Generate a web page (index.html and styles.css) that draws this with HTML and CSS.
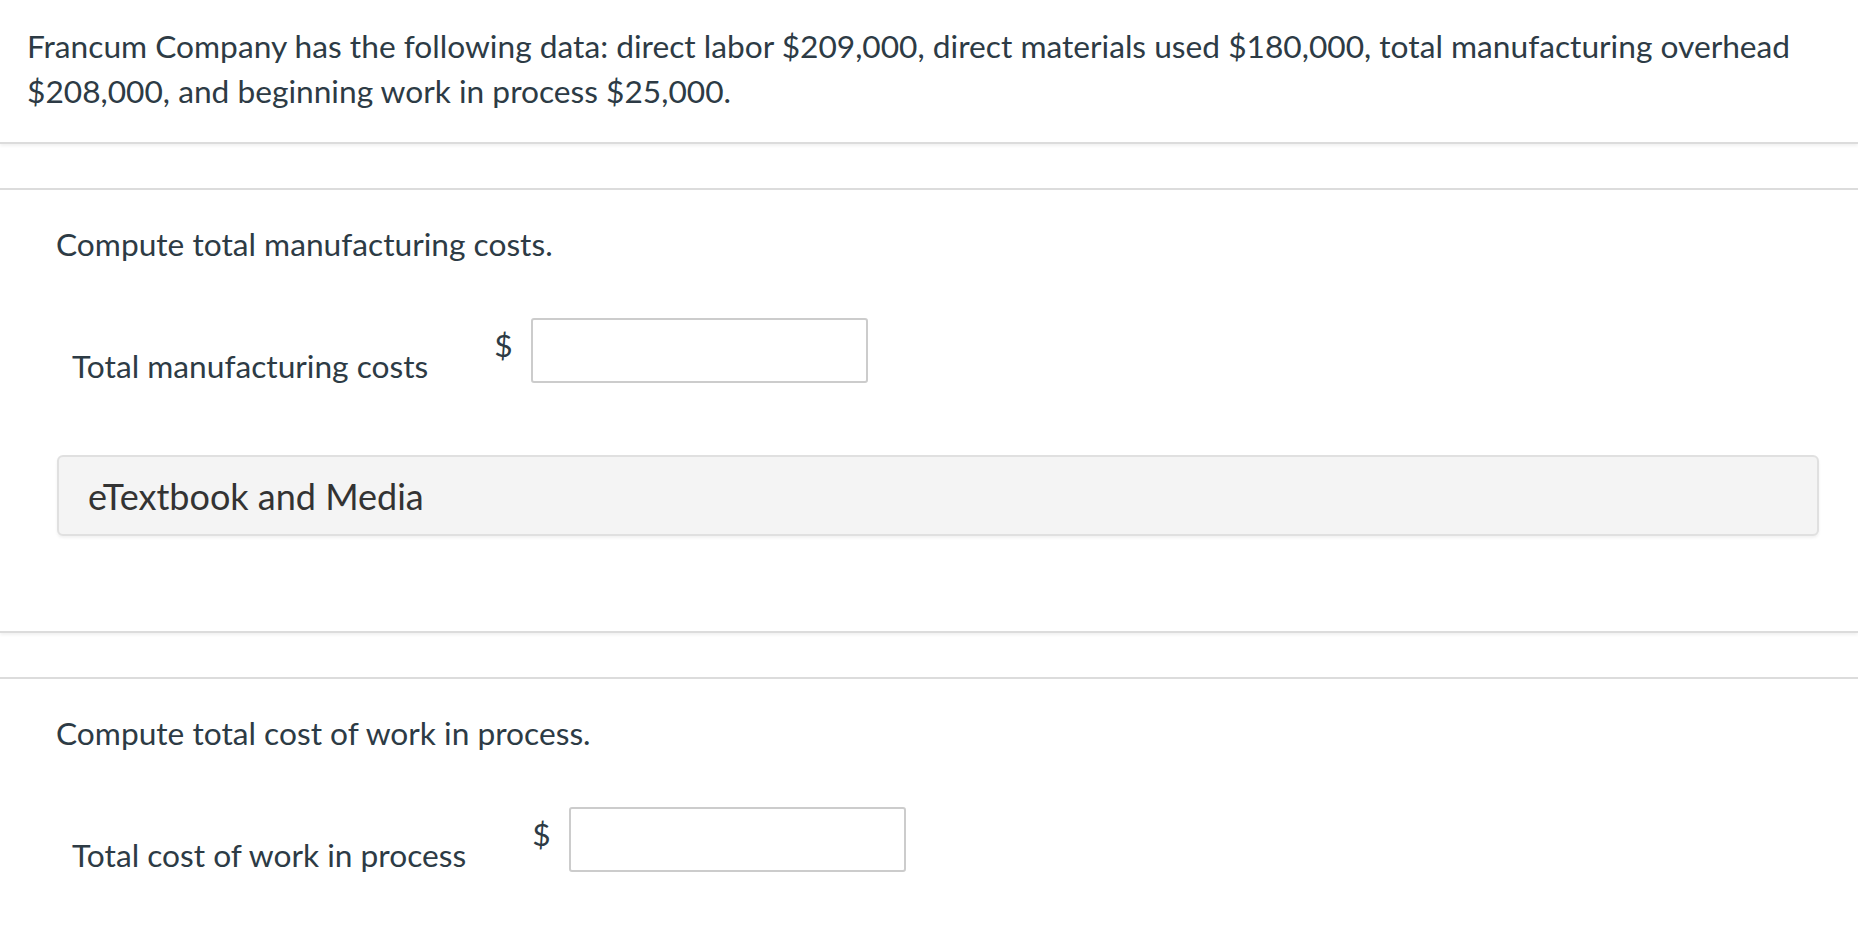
FILE: index.html
```html
<!DOCTYPE html>
<html lang="en">
<head>
<meta charset="utf-8">
<title>Francum Company</title>
<link rel="stylesheet" href="styles.css">
</head>
<body>
<div class="page">
  <section class="stem">
    <p class="stem-text">Francum Company has the following data: direct labor $209,000, direct materials used $180,000, total manufacturing overhead $208,000, and beginning work in process $25,000.</p>
  </section>

  <section class="part">
    <p class="prompt">Compute total manufacturing costs.</p>
    <div class="answer-row">
      <span class="answer-label">Total manufacturing costs</span>
      <span class="currency">$</span>
      <input class="answer-input" type="text" aria-label="Total manufacturing costs">
    </div>
    <div class="media-box">eTextbook and Media</div>
  </section>

  <section class="part part-last">
    <p class="prompt">Compute total cost of work in process.</p>
    <div class="answer-row">
      <span class="answer-label">Total cost of work in process</span>
      <span class="currency">$</span>
      <input class="answer-input" type="text" aria-label="Total cost of work in process">
    </div>
  </section>
</div>
</body>
</html>
```

FILE: styles.css
```css
html, body {
  margin: 0;
  padding: 0;
  background: #ffffff;
}

body {
  font-family: Lato, "Open Sans", "Liberation Sans", sans-serif;
  color: #2d3b45;
  font-size: 31.7px;
  line-height: 45px;
}

.page {
  display: flex;
  flex-direction: column;
  gap: 44px;
}

.stem {
  padding: 24px 28px 28px 27px;
  border-bottom: 2px solid #dcdcdc;
  box-shadow: 0 2px 3px rgba(0, 0, 0, 0.06);
}

.stem-text {
  margin: 0;
}

.part {
  border-top: 2px solid #dcdcdc;
  border-bottom: 2px solid #dcdcdc;
  box-shadow: 0 2px 3px rgba(0, 0, 0, 0.06);
  padding: 32px 39px 95px 56px;
  display: flex;
  flex-direction: column;
}

.part-last {
  border-bottom: none;
  box-shadow: none;
  padding-bottom: 60px;
}

.prompt {
  margin: 0 0 51px 0;
}

.answer-row {
  display: flex;
  align-items: flex-start;
  padding-left: 16px;
}

.answer-label {
  margin-top: 26px;
  margin-right: 66px;
}

.currency {
  margin-top: 5px;
  margin-right: 18px;
}

.answer-input {
  box-sizing: border-box;
  width: 337px;
  height: 65px;
  border: 2px solid #cccccc;
  border-radius: 3px;
  background: #ffffff;
  margin: 0;
  padding: 0 10px;
  font: inherit;
}

.media-box {
  margin-top: 66px;
  margin-left: 1px;
  box-sizing: border-box;
  height: 81px;
  padding: 14px 29px 12px 29px;
  border: 2px solid #e0e0e0;
  border-radius: 6px;
  background: #f4f4f4;
  box-shadow: 0 2px 3px rgba(0, 0, 0, 0.06);
  color: #333333;
  font-size: 36px;
  line-height: 51px;
}
```
